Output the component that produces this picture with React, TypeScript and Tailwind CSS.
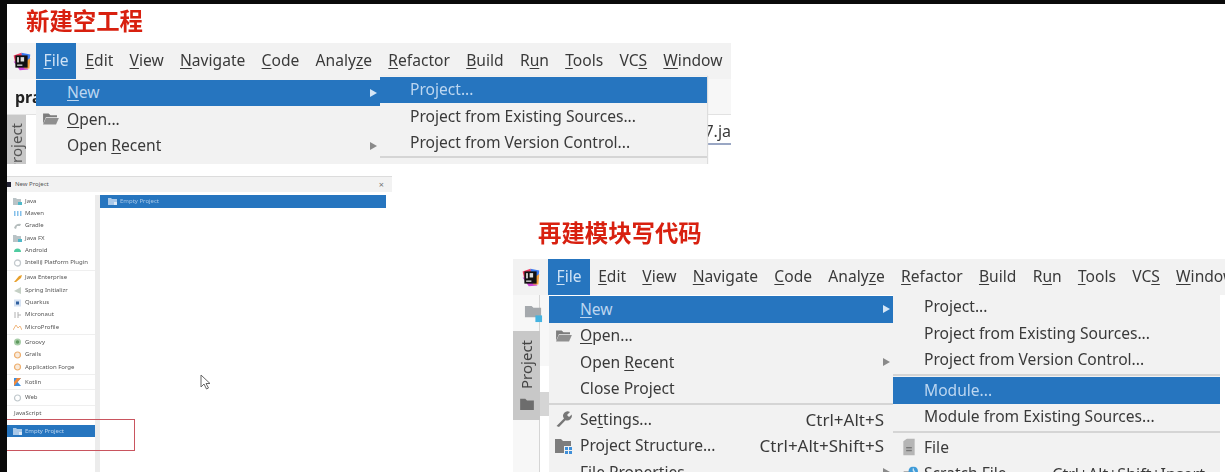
import React from "react";

const sans = "[font-family:'Noto_Sans','Liberation_Sans',sans-serif]";

function Mn({ t, i }: { t: string; i?: number }) {
  if (i === undefined) return <>{t}</>;
  return (
    <>
      {t.slice(0, i)}
      <u className="underline-offset-2">{t[i]}</u>
      {t.slice(i + 1)}
    </>
  );
}

function Logo() {
  return (
    <svg viewBox="0 0 24 24" className="h-[21px] w-[21px]">
      <path d="M3 5 L12 2 L14 10 L5 14 Z" fill="#f0385f" />
      <path d="M12 2 L22 4 L21 14 L13 12 Z" fill="#3d7bf0" />
      <path d="M3 12 L10 22 L20 21 L12 12 Z" fill="#c93ed0" />
      <path d="M15 13 L22 8 L21 20 L15 20 Z" fill="#f5a13c" />
      <rect x="5" y="5" width="14" height="14" fill="#111" />
      <rect x="7" y="15.5" width="6" height="1.3" fill="#fff" />
      <rect x="7" y="7" width="2" height="6" fill="#ddd" />
      <rect x="11" y="7" width="4" height="5" fill="#ddd" />
    </svg>
  );
}

const barItems: [string, number | undefined][] = [
  ["Edit", 0], ["View", 0], ["Navigate", 0], ["Code", 0], ["Analyze", 5],
  ["Refactor", 0], ["Build", 0], ["Run", 1], ["Tools", 0], ["VCS", 2], ["Window", 0],
];

function MenuBar({ logoW, fileW, itemsPl }: { logoW: string; fileW: string; itemsPl: string }) {
  return (
    <div className="flex h-[36px] shrink-0 items-stretch bg-[#f2f2f2] text-[15.6px] text-[#3a3a3a]">
      <div className={`flex shrink-0 items-center justify-center ${logoW}`}>
        <Logo />
      </div>
      <div className={`flex shrink-0 items-center justify-center bg-[#2675bf] text-[#cfe2f5] ${fileW}`}>
        <Mn t="File" i={0} />
      </div>
      <div className={`flex shrink-0 items-center ${itemsPl}`}>
        {barItems.map(([t, i]) => (
          <span key={t} className="whitespace-nowrap px-[8.15px]">
            <Mn t={t} i={i} />
          </span>
        ))}
      </div>
    </div>
  );
}

function FolderOpen() {
  return (
    <svg viewBox="0 0 18 14" className="h-[13px] w-[17px]">
      <path d="M1 1h6l2 2h7v2H4L1 12Z" fill="#7d7d7d" />
      <path d="M4 6h14l-3 7H1Z" fill="#8f8f8f" />
    </svg>
  );
}
function Wrench() {
  return (
    <svg viewBox="0 0 18 18" className="h-[18px] w-[18px]">
      <path d="M1.5 16 L9 8.5 A4.5 4.5 0 0 1 15 2 L12 5 L14 7 L16.8 4.5 A4.8 4.8 0 0 1 10.5 10.2 L4 17 Z" fill="#777" />
    </svg>
  );
}
function ProjStruct() {
  return (
    <svg viewBox="0 0 18 16" className="h-[16px] w-[18px]">
      <path d="M0 1h6l2 2h8v5H9v7H0Z" fill="#7d7d7d" />
      <rect x="10" y="9" width="3" height="3" fill="#3f8fd8" />
      <rect x="14" y="9" width="3" height="3" fill="#3f8fd8" />
      <rect x="14" y="13" width="3" height="3" fill="#3f8fd8" />
      <rect x="10" y="13" width="3" height="3" fill="#3f8fd8" />
    </svg>
  );
}
function FileIcon() {
  return (
    <svg viewBox="0 0 12 18" className="h-[17px] w-[12px]">
      <path d="M0 3 L4 0 H12 V18 H0 Z" fill="#b5b5b5" />
      <rect x="3" y="9" width="6" height="1.5" fill="#777" />
      <rect x="3" y="12" width="6" height="1.5" fill="#777" />
    </svg>
  );
}
function Scratch() {
  return (
    <svg viewBox="0 0 22 16" className="h-[15px] w-[21px]">
      <path d="M0 14 L5 5 H12 V14 Z" fill="#9a9a9a" />
      <circle cx="15" cy="5" r="5" fill="#3f9bd8" />
      <path d="M15 2v3h2" stroke="#fff" strokeWidth="1" fill="none" />
    </svg>
  );
}

type RowProps = {
  t: string;
  i?: number;
  active?: boolean;
  arrow?: boolean;
  icon?: React.ReactNode;
  shortcut?: string;
  scCls?: string;
  iconLeft?: string;
  pad: string;
};

function Row({ t, i, active, arrow, icon, shortcut, scCls, iconLeft, pad }: RowProps) {
  return (
    <div
      className={`relative flex h-[26.5px] shrink-0 items-center whitespace-nowrap ${pad} ${
        active ? "bg-[#2675bf] text-[#bcd6f0]" : "text-[#3a3a3a]"
      }`}
    >
      {icon && <span className={`absolute top-1/2 flex -translate-y-1/2 items-center ${iconLeft ?? "left-[6px]"}`}>{icon}</span>}
      <span>
        <Mn t={t} i={i} />
      </span>
      {shortcut && <span className={`ml-auto ${scCls ?? "pr-[9px] text-[17px]"}`}>{shortcut}</span>}
      {arrow && (
        <span
          className={`absolute right-[3px] top-1/2 h-0 w-0 -translate-y-1/2 border-y-[4.5px] border-l-[7px] border-y-transparent ${
            active ? "border-l-[#d5e6f6]" : "border-l-[#8a8a8a]"
          }`}
        />
      )}
    </div>
  );
}

const Sep = () => <div className="my-[1px] h-[2px] shrink-0 bg-[#d5d5d5]" />;

function Snippet1() {
  return (
    <div className="absolute left-0 top-[39px] h-[121px] w-[724px] overflow-hidden bg-white">
      <MenuBar logoW="w-[29px]" fileW="w-[40px]" itemsPl="pl-[1.25px]" />
      <div className="flex h-[36px] items-center border-b border-[#e2e2e2] bg-[#f7f7f7] pl-[8px] text-[16px] font-bold text-[#222]">
        pra
      </div>
      <div className="flex h-[49px]">
        <div className="flex h-full w-[19px] items-start justify-center overflow-hidden bg-[#c8c8c8] pt-[8px] text-[15px] text-[#555]">
          <span className="rotate-180 whitespace-nowrap [writing-mode:vertical-rl]">Project</span>
        </div>
        <div className="flex flex-1 items-start justify-end pt-[4px] text-[16px] text-[#3a3a3a]">
          <span className="border-b-2 border-[#9aa7c4] leading-[24px]">7.ja</span>
        </div>
      </div>

      <div className="absolute left-[29px] top-[36px] flex h-[85px] w-[344px] flex-col bg-[#f2f2f2] pt-[0.5px] text-[15.6px]">
        <Row t="New" i={0} active arrow pad="pl-[31px]" />
        <Row t="Open..." i={0} pad="pl-[31px]" icon={<FolderOpen />} />
        <Row t="Open Recent" i={5} arrow pad="pl-[31px]" />
      </div>
      <div className="absolute left-[373px] top-[33px] flex h-[88px] w-[327px] flex-col bg-[#f2f2f2] pt-[0.5px] text-[15.6px] shadow-[1px_0_1px_#ddd]">
        <Row t="Project..." active pad="pl-[30px]" />
        <Row t="Project from Existing Sources..." pad="pl-[30px]" />
        <Row t="Project from Version Control..." pad="pl-[30px]" />
        <div className="h-[2px] bg-[#d5d5d5]" />
      </div>
    </div>
  );
}

function Snippet2() {
  return (
    <div className="absolute left-[506px] top-[255px] h-[213px] w-[712px] overflow-hidden bg-white">
      <MenuBar logoW="w-[35px]" fileW="w-[42px]" itemsPl="pl-0" />
      <div className="flex h-[177px]">
        <div className="flex w-[27px] flex-col border-r border-[#d5d5d5] bg-[#f7f7f7]">
          <div className="flex h-[36px] shrink-0 items-center justify-end">
            <svg viewBox="0 0 20 20" className="relative -mr-[4px] h-[19px] w-[19px]">
              <path d="M1 2h7l2 2h8v10H1Z" fill="#a5a9ad" />
              <rect x="12" y="12" width="7" height="7" fill="#45b3e0" />
            </svg>
          </div>
          <div className="flex h-[89px] w-[27px] shrink-0 flex-col items-center bg-[#c8c8c8] pt-[9px] text-[15px] text-[#444]">
            <span className="rotate-180 whitespace-nowrap [writing-mode:vertical-rl]">Project</span>
            <svg viewBox="0 0 16 14" className="mt-[9px] h-[12px] w-[14px]">
              <path d="M0 1h6l2 2h8v11H0Z" fill="#6d6d6d" />
            </svg>
          </div>
        </div>
        <div className="flex w-[9px] flex-col">
          <div className="h-[71px] shrink-0 bg-[#f7f7f7]" />
          <div className="h-[26px] shrink-0 bg-white" />
          <div className="h-[24px] shrink-0 bg-[#d5d5d5]" />
        </div>
      </div>

      <div className="absolute left-[36px] top-[37px] flex h-[176px] w-[344px] flex-col bg-[#f2f2f2] text-[15.6px]">
        <Row t="New" i={0} active arrow pad="pl-[31px]" />
        <Row t="Open..." i={0} pad="pl-[31px]" icon={<FolderOpen />} />
        <Row t="Open Recent" i={5} arrow pad="pl-[31px]" />
        <Row t="Close Project" pad="pl-[31px]" />
        <Sep />
        <Row t="Settings..." i={2} pad="pl-[31px]" shortcut="Ctrl+Alt+S" icon={<Wrench />} />
        <Row t="Project Structure..." pad="pl-[31px]" shortcut="Ctrl+Alt+Shift+S" icon={<ProjStruct />} />
        <Row t="File Properties" arrow pad="pl-[31px]" />
      </div>
      <div className="absolute left-[380px] top-[33px] flex h-[180px] w-[327px] flex-col bg-[#f2f2f2] pt-[1.5px] text-[15.6px]">
        <Row t="Project..." pad="pl-[31px]" />
        <Row t="Project from Existing Sources..." pad="pl-[31px]" />
        <Row t="Project from Version Control..." pad="pl-[31px]" />
        <Sep />
        <Row t="Module..." active pad="pl-[31px]" />
        <Row t="Module from Existing Sources..." pad="pl-[31px]" />
        <Sep />
        <Row t="File" pad="pl-[31px]" icon={<FileIcon />} iconLeft="left-[10px]" />
        <Row t="Scratch File" pad="pl-[31px]" shortcut="Ctrl+Alt+Shift+Insert" scCls="pr-[15px] text-[16px]" icon={<Scratch />} iconLeft="left-[6px]" />
      </div>
    </div>
  );
}

function MiniIcon({ kind }: { kind: string }) {
  const cls = "block h-[8px] w-[9px] shrink-0";
  const body: Record<string, React.ReactNode> = {
    java: (
      <>
        <path d="M0 1h3l1 1h4v6H0Z" fill="#b9c3c6" />
        <rect x="5" y="5" width="4" height="3" fill="#4fb8c8" />
      </>
    ),
    maven: <path d="M1 7V2h1.5v5M4 7V2h1.5v5M7 7V2h1.5v5" fill="#84c0ea" />,
    gradle: <path d="M1 6 Q3 1 8 2 L7 4 L4 4 L3 7Z" fill="#b5bdbd" />,
    android: <path d="M1 6 A3.5 3.5 0 0 1 8 6Z" fill="#4fcba0" />,
    plugin: <circle cx="4.5" cy="4" r="3" fill="none" stroke="#c4cace" strokeWidth="1.3" />,
    ee: <path d="M1 8 L6 2 L9 1 L8 4 L3 8Z" fill="#e8a02c" />,
    spring: <path d="M1 5 L8 1 V8 Z" fill="#c5d0c5" />,
    quarkus: (
      <>
        <rect x="1" y="0.5" width="7" height="7" fill="#d6e2f2" />
        <rect x="3" y="2.5" width="3" height="3" fill="#2f5f9e" />
      </>
    ),
    micronaut: <path d="M2 1v6M5 1v6M5 4h3" stroke="#b0b0b0" strokeWidth="1" fill="none" />,
    profile: <path d="M0 7 L3 2 L5 5 L7 3 L9 7" stroke="#f0b880" strokeWidth="1" fill="none" />,
    groovy: (
      <>
        <circle cx="4.5" cy="4" r="3.5" fill="#a8cda8" />
        <circle cx="4.5" cy="4" r="1.8" fill="#5f9a5f" />
      </>
    ),
    grails: <circle cx="4.5" cy="4" r="3" fill="#f8eadb" stroke="#eeb070" strokeWidth="1.2" />,
    kotlin: (
      <>
        <path d="M1 0h7L4.5 4 8 8H1Z" fill="#3f8fe0" />
        <path d="M4 0h4L1 8V4Z" fill="#f08a3c" />
      </>
    ),
    web: <circle cx="4.5" cy="4" r="3" fill="#fff" stroke="#c0c8cc" strokeWidth="1.2" />,
    empty: (
      <>
        <path d="M0 1h3l1 1h5v6H0Z" fill="#a9c8e8" />
        <rect x="6" y="5" width="3" height="3" fill="#dbe8f5" />
      </>
    ),
  };
  return (
    <svg viewBox="0 0 9 8" className={cls}>
      {body[kind]}
    </svg>
  );
}

type Li = { t: string; k: string } | "sep";
const list: Li[] = [
  { t: "Java", k: "java" },
  { t: "Maven", k: "maven" },
  { t: "Gradle", k: "gradle" },
  { t: "Java FX", k: "java" },
  { t: "Android", k: "android" },
  { t: "IntelliJ Platform Plugin", k: "plugin" },
  "sep",
  { t: "Java Enterprise", k: "ee" },
  { t: "Spring Initializr", k: "spring" },
  { t: "Quarkus", k: "quarkus" },
  { t: "Micronaut", k: "micronaut" },
  { t: "MicroProfile", k: "profile" },
  "sep",
  { t: "Groovy", k: "groovy" },
  { t: "Grails", k: "grails" },
  { t: "Application Forge", k: "grails" },
  "sep",
  { t: "Kotlin", k: "kotlin" },
  "sep",
  { t: "Web", k: "web" },
  "sep",
];

function Dialog() {
  return (
    <div className="absolute left-0 top-[172px] flex h-[296px] w-[385px] flex-col overflow-hidden border-t border-[#dcdcdc] bg-white text-[6px] text-[#555]">
      <div className="flex h-[15px] shrink-0 items-center justify-between bg-[#f2f2f2] pr-[8px]">
        <div className="flex items-center gap-[3px]">
          <span className="block h-[5px] w-[4px] bg-[#223]" />
          <span className="pl-[1px]">New Project</span>
        </div>
        <span className="text-[9px] leading-none text-[#777]">×</span>
      </div>
      <div className="flex flex-1 pt-[3px]">
        <div className="flex w-[88px] shrink-0 flex-col">
          {list.map((it, n) =>
            it === "sep" ? (
              <div key={n} className="my-[1px] h-[1px] shrink-0 bg-[#efefef]" />
            ) : (
              <div key={it.t} className="flex h-[12.3px] shrink-0 items-center gap-[3px] whitespace-nowrap pl-[6px]">
                <MiniIcon kind={it.k} />
                <span>{it.t}</span>
              </div>
            ),
          )}
          <div className="flex h-[14px] shrink-0 items-center pl-[7px]">JavaScript</div>
          <div className="mt-[4px] flex h-[12.5px] shrink-0 items-center gap-[3px] whitespace-nowrap bg-[#2675bf] pl-[6px] text-[#b9d3ee]">
            <MiniIcon kind="empty" />
            <span>Empty Project</span>
          </div>
        </div>
        <div className="w-[5px] shrink-0 bg-[#ececec]" />
        <div className="flex-1 pr-[6px]">
          <div className="flex h-[12.5px] items-center gap-[3px] bg-[#2675bf] pl-[8px] text-[#a9c8e8]">
            <MiniIcon kind="empty" />
            <span>Empty Project</span>
          </div>
        </div>
      </div>
    </div>
  );
}

export default function App() {
  return (
    <div className={`flex h-[472px] w-[1225px] flex-col overflow-hidden bg-white ${sans}`}>
      <div className="h-[4px] shrink-0 bg-[#0a0a0a]" />
      <div className="flex flex-1">
        <div className="w-[7px] shrink-0 bg-[#0a0a0a]" />
        <div className="relative flex-1 overflow-hidden blur-[0.4px]">
          <div className="absolute left-[19px] top-[1px] whitespace-nowrap text-[23.4px] font-bold leading-[30px] text-[#d8200f] [font-family:'Noto_Sans_CJK_SC',sans-serif]">
            新建空工程
          </div>
          <div className="absolute left-[531px] top-[213px] whitespace-nowrap text-[23.4px] font-bold leading-[30px] text-[#d8200f] [font-family:'Noto_Sans_CJK_SC',sans-serif]">
            再建模块写代码
          </div>
          <Snippet1 />
          <Dialog />
          <Snippet2 />
          <div className="absolute left-0 top-[415px] h-[32px] w-[128px] border border-l-0 border-[#c9555f]" />
          <svg viewBox="0 0 12 16" className="absolute left-[193px] top-[370px] h-[16px] w-[12px]">
            <path d="M1 1 V13 L4 10 L6.5 15 L8.5 14 L6 9.5 H10 Z" fill="#fff" stroke="#666" strokeWidth="1" />
          </svg>
        </div>
      </div>
    </div>
  );
}
